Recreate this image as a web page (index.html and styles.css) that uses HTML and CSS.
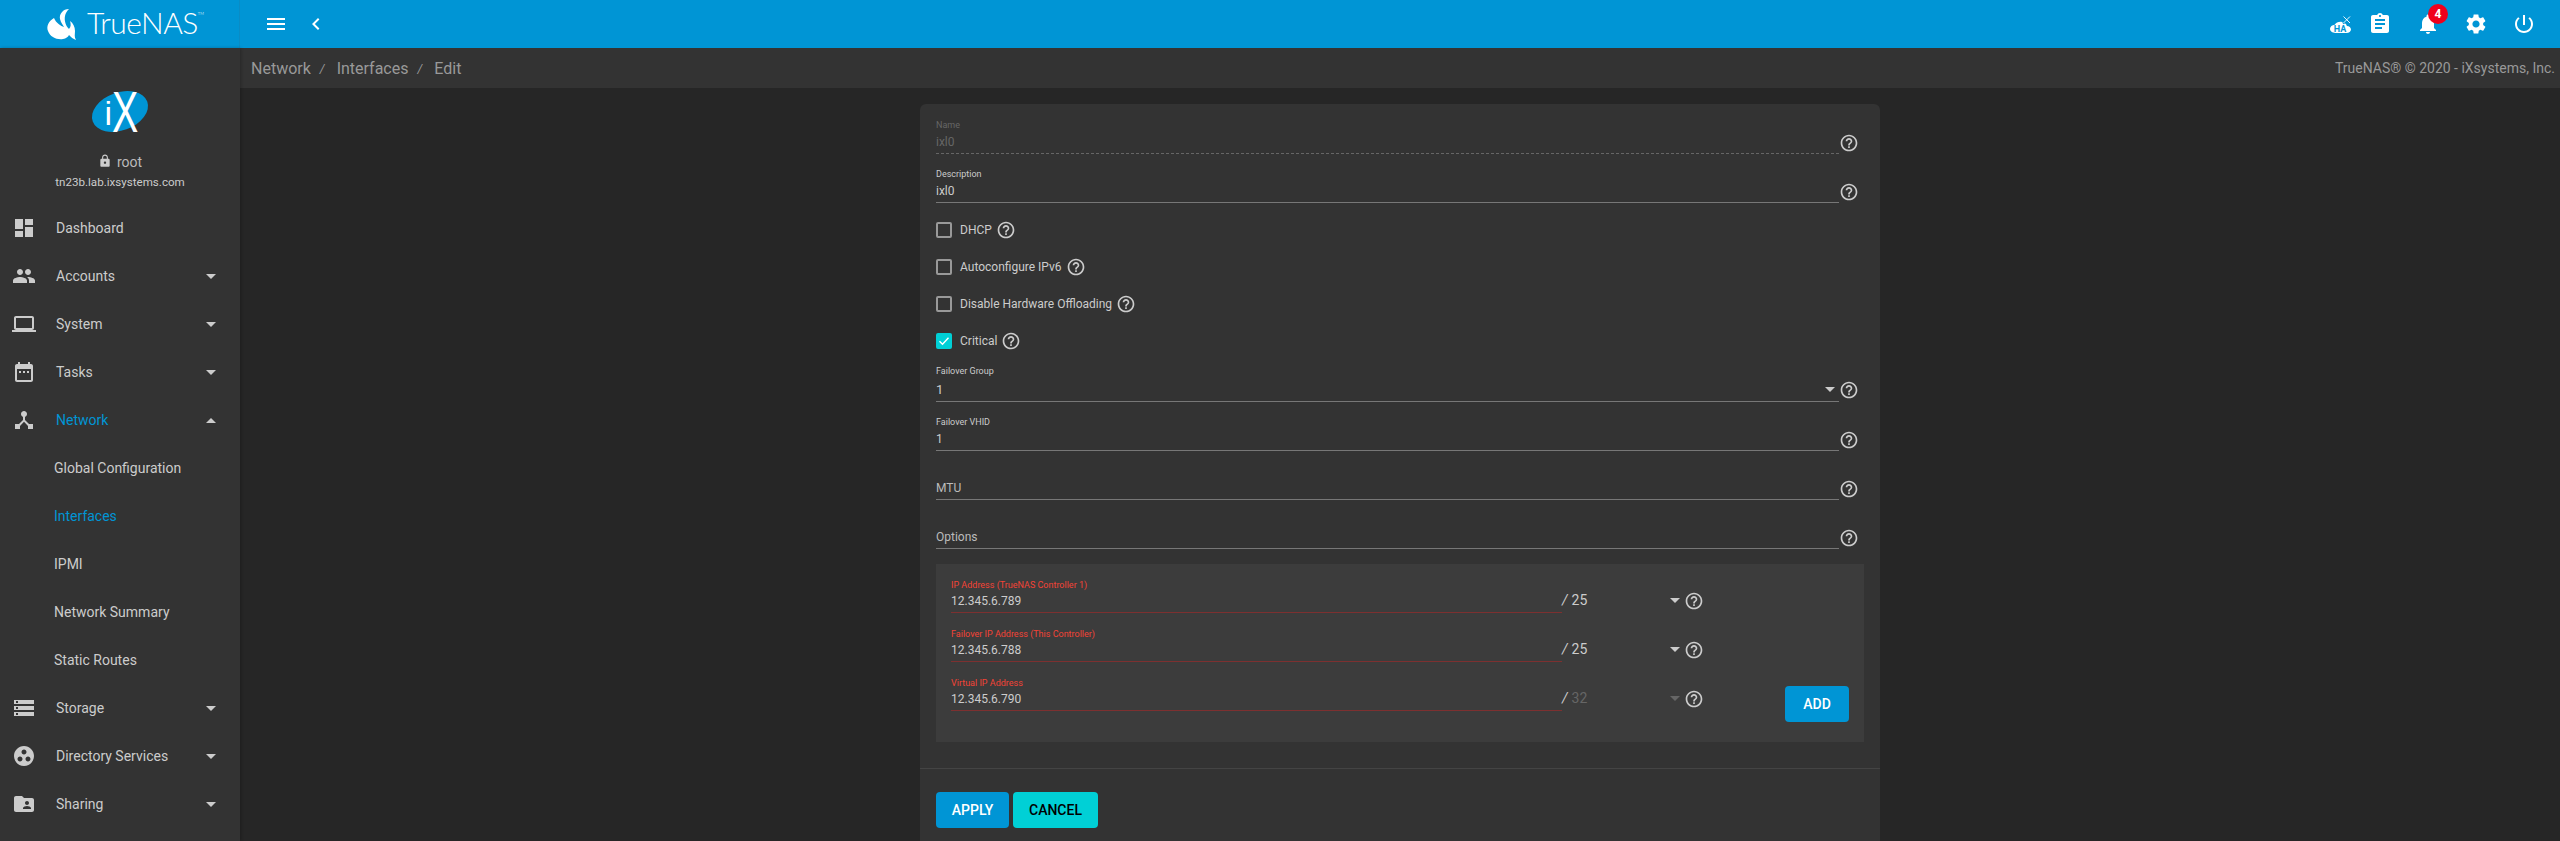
FILE: index.html
```html
<!DOCTYPE html>
<html>
  <head>
    <meta charset="utf-8">
    <title>TrueNAS - Network / Interfaces / Edit</title>
    <link rel="stylesheet" href="styles.css">
  </head>
  <body>

    <svg class="defs" width="0" height="0">
      <symbol id="i-dashboard" viewBox="0 0 24 24"><path d="M3 13h8V3H3v10zm0 8h8v-6H3v6zm10 0h8V11h-8v10zm0-18v6h8V3h-8z"/></symbol>
      <symbol id="i-people" viewBox="0 0 24 24"><path d="M16 11c1.66 0 2.99-1.34 2.99-3S17.66 5 16 5c-1.66 0-3 1.34-3 3s1.34 3 3 3zm-8 0c1.66 0 2.99-1.34 2.99-3S9.66 5 8 5C6.34 5 5 6.34 5 8s1.34 3 3 3zm0 2c-2.33 0-7 1.17-7 3.5V19h14v-2.5c0-2.33-4.67-3.5-7-3.5zm8 0c-.29 0-.62.02-.97.05 1.16.84 1.97 1.97 1.97 3.45V19h6v-2.5c0-2.33-4.67-3.5-7-3.5z"/></symbol>
      <symbol id="i-laptop" viewBox="0 0 24 24"><path d="M20 18c1.1 0 1.99-.9 1.99-2L22 6c0-1.1-.9-2-2-2H4c-1.1 0-2 .9-2 2v10c0 1.1.9 2 2 2H0v2h24v-2h-4zM4 6h16v10H4V6z"/></symbol>
      <symbol id="i-tasks" viewBox="0 0 24 24"><path d="M9 11H7v2h2v-2zm4 0h-2v2h2v-2zm4 0h-2v2h2v-2zm2-7h-1V2h-2v2H8V2H6v2H5c-1.11 0-1.99.9-1.99 2L3 20c0 1.1.89 2 2 2h14c1.1 0 2-.9 2-2V6c0-1.1-.9-2-2-2zm0 16H5V9h14v11z"/></symbol>
      <symbol id="i-hub" viewBox="0 0 24 24"><path d="M17 16l-4-4V8.82C14.16 8.4 15 7.3 15 6c0-1.66-1.34-3-3-3S9 4.34 9 6c0 1.3.84 2.4 2 2.82V12l-4 4H3v5h5v-3.05l4-4.2 4 4.2V21h5v-5h-4z"/></symbol>
      <symbol id="i-storage" viewBox="0 0 24 24"><path d="M2 20h20v-4H2v4zm2-3h2v2H4v-2zM2 4v4h20V4H2zm4 3H4V5h2v2zm-4 7h20v-4H2v4zm2-3h2v2H4v-2z"/></symbol>
      <symbol id="i-group" viewBox="0 0 24 24"><path d="M12 2C6.48 2 2 6.48 2 12s4.48 10 10 10 10-4.48 10-10S17.52 2 12 2zM8 17.5c-1.38 0-2.5-1.12-2.5-2.5s1.12-2.5 2.5-2.5 2.5 1.12 2.5 2.5-1.12 2.5-2.5 2.5zM9.5 8c0-1.38 1.12-2.5 2.5-2.5s2.5 1.12 2.5 2.5-1.12 2.5-2.5 2.5S9.5 9.38 9.5 8zm6.5 9.5c-1.38 0-2.5-1.12-2.5-2.5s1.12-2.5 2.5-2.5 2.5 1.12 2.5 2.5-1.12 2.5-2.5 2.5z"/></symbol>
      <symbol id="i-folder" viewBox="0 0 24 24"><path d="M20 6h-8l-2-2H4c-1.1 0-1.99.9-1.99 2L2 18c0 1.1.9 2 2 2h16c1.1 0 2-.9 2-2V8c0-1.1-.9-2-2-2zm-5 3c1.1 0 2 .9 2 2s-.9 2-2 2-2-.9-2-2 .9-2 2-2zm4 8h-8v-1c0-1.33 2.67-2 4-2s4 .67 4 2v1z"/></symbol>
      <symbol id="i-help" viewBox="0 0 24 24"><path d="M11 18h2v-2h-2v2zm1-16C6.48 2 2 6.48 2 12s4.48 10 10 10 10-4.48 10-10S17.52 2 12 2zm0 18c-4.41 0-8-3.59-8-8s3.59-8 8-8 8 3.59 8 8-3.59 8-8 8zm0-14c-2.21 0-4 1.79-4 4h2c0-1.1.9-2 2-2s2 .9 2 2c0 2-3 1.75-3 5h2c0-2.25 3-2.5 3-5 0-2.21-1.79-4-4-4z"/></symbol>
    </svg>

    <div id="app">
      <div class="topbar">
        <div class="brand">
          <svg class="brand-mark" viewBox="0 0 44 36" width="44" height="36">
            <path d="M29 3C23 3 19 8 20 13C21 17 23 19 24 21C21 20 16 17 14 12C9 15 6 20 8 25C10 31 17 34 23 33C26 32.500 28 31 29 29C31 31 33 33 36 34C34 31 35 28 35 25C35 21 33 17 30 15C31 18 31 21 29 23C26 20 24 15 25 10C25.500 7 27 5 29 3Z" fill="#fff"/>
          </svg>
          <span class="brand-name">TrueNAS<sup>TM</sup></span>
        </div>
        <div class="topbar-left">
          <svg class="bar-icon" viewBox="0 0 24 24"><path d="M3 18h18v-2H3v2zm0-5h18v-2H3v2zm0-7v2h18V6H3z"/></svg>
          <svg class="bar-icon" viewBox="0 0 24 24"><path d="M15.41 7.41L14 6l-6 6 6 6 1.41-1.41L10.83 12z"/></svg>
        </div>
        <div class="topbar-right">
          <svg class="bar-icon ha" viewBox="0 0 24 24">
            <path transform="translate(2 7) scale(.875 .7)" d="M19.35 10.04C18.67 6.59 15.64 4 12 4 9.11 4 6.6 5.64 5.35 8.04 2.34 8.36 0 10.91 0 14c0 3.31 2.69 6 6 6h13c2.76 0 5-2.24 5-5 0-2.64-2.05-4.78-4.65-4.96z"/>
            <text class="ha-text" x="12" y="19.500">HA</text>
            <path d="M15 4l7.500 7.500M22.500 4L15 11.500" stroke="#0095d5" stroke-width="2.400" fill="none"/>
            <path d="M15.500 4.500l6.500 6.500M22 4.500L15.500 11" stroke="#fff" stroke-width=".9" fill="none"/>
          </svg>
          <svg class="bar-icon" viewBox="0 0 24 24"><path d="M19 3h-4.18C14.4 1.84 13.3 1 12 1c-1.3 0-2.4.84-2.82 2H5c-1.1 0-2 .9-2 2v14c0 1.1.9 2 2 2h14c1.1 0 2-.9 2-2V5c0-1.1-.9-2-2-2zm-7 0c.55 0 1 .45 1 1s-.45 1-1 1-1-.45-1-1 .45-1 1-1zm2 14H7v-2h7v2zm3-4H7v-2h10v2zm0-4H7V7h10v2z"/></svg>
          <div class="bell">
            <svg class="bar-icon" viewBox="0 0 24 24"><path d="M12 22c1.1 0 2-.9 2-2h-4c0 1.1.89 2 2 2zm6-6v-5c0-3.07-1.64-5.64-4.5-6.32V4c0-.83-.67-1.5-1.5-1.5s-1.5.67-1.5 1.5v.68C7.63 5.36 6 7.92 6 11v5l-2 2v1h16v-1l-2-2z"/></svg>
            <span class="badge">4</span>
          </div>
          <svg class="bar-icon" viewBox="0 0 24 24"><path d="M19.14 12.94c.04-.3.06-.61.06-.94 0-.32-.02-.64-.07-.94l2.03-1.58c.18-.14.23-.41.12-.61l-1.92-3.32c-.12-.22-.37-.29-.59-.22l-2.39.96c-.5-.38-1.03-.7-1.62-.94l-.36-2.54c-.04-.24-.24-.41-.48-.41h-3.84c-.24 0-.43.17-.47.41l-.36 2.54c-.59.24-1.13.57-1.62.94l-2.39-.96c-.22-.08-.47 0-.59.22L2.74 8.87c-.12.21-.08.47.12.61l2.03 1.58c-.05.3-.09.63-.09.94s.02.64.07.94l-2.03 1.58c-.18.14-.23.41-.12.61l1.92 3.32c.12.22.37.29.59.22l2.39-.96c.5.38 1.03.7 1.62.94l.36 2.54c.05.24.24.41.48.41h3.84c.24 0 .44-.17.47-.41l.36-2.54c.59-.24 1.13-.56 1.62-.94l2.39.96c.22.08.47 0 .59-.22l1.92-3.32c.12-.22.07-.47-.12-.61l-2.01-1.58zM12 15.6c-1.98 0-3.6-1.62-3.6-3.6s1.62-3.6 3.6-3.6 3.6 1.62 3.6 3.6-1.62 3.6-3.6 3.6z"/></svg>
          <svg class="bar-icon" viewBox="0 0 24 24"><path d="M13 3h-2v10h2V3zm4.83 2.17l-1.42 1.42C17.99 7.86 19 9.81 19 12c0 3.87-3.13 7-7 7s-7-3.13-7-7c0-2.19 1.01-4.14 2.58-5.42L6.17 5.17C4.23 6.82 3 9.26 3 12c0 4.97 4.03 9 9 9s9-4.03 9-9c0-2.74-1.23-5.18-3.17-6.83z"/></svg>
        </div>
      </div>

      <div class="body">
        <div class="sidebar">
          <div class="profile">
            <svg class="ix-logo" viewBox="0 0 70 70" width="70" height="70">
              <ellipse cx="35" cy="35.500" rx="29" ry="19" transform="rotate(-20 35 35.500)" fill="#0095d5"/>
              <text class="ix-text" x="19.500" y="49" font-size="34">i</text>
              <text class="ix-text" transform="translate(27 56) scale(.68 1)" font-size="58">X</text>
            </svg>
            <div class="profile-user">
              <svg class="lock" viewBox="0 0 24 24"><path d="M18 8h-1V6c0-2.76-2.24-5-5-5S7 3.24 7 6v2H6c-1.1 0-2 .9-2 2v10c0 1.1.9 2 2 2h12c1.1 0 2-.9 2-2V10c0-1.1-.9-2-2-2zm-6 9c-1.1 0-2-.9-2-2s.9-2 2-2 2 .9 2 2-.9 2-2 2zm3.1-9H8.9V6c0-1.71 1.39-3.1 3.1-3.1 1.71 0 3.1 1.39 3.1 3.1v2z"/></svg>
              root
            </div>
            <div class="profile-host">tn23b.lab.ixsystems.com</div>
          </div>
          <div class="nav">
            <div class="nav-item"><svg class="nav-icon"><use href="#i-dashboard"/></svg>Dashboard</div>
            <div class="nav-item"><svg class="nav-icon"><use href="#i-people"/></svg>Accounts<span class="caret"></span></div>
            <div class="nav-item"><svg class="nav-icon"><use href="#i-laptop"/></svg>System<span class="caret"></span></div>
            <div class="nav-item"><svg class="nav-icon"><use href="#i-tasks"/></svg>Tasks<span class="caret"></span></div>
            <div class="nav-item active"><svg class="nav-icon"><use href="#i-hub"/></svg>Network<span class="caret up"></span></div>
            <div class="nav-sub">Global Configuration</div>
            <div class="nav-sub active">Interfaces</div>
            <div class="nav-sub">IPMI</div>
            <div class="nav-sub">Network Summary</div>
            <div class="nav-sub">Static Routes</div>
            <div class="nav-item"><svg class="nav-icon"><use href="#i-storage"/></svg>Storage<span class="caret"></span></div>
            <div class="nav-item"><svg class="nav-icon"><use href="#i-group"/></svg>Directory Services<span class="caret"></span></div>
            <div class="nav-item"><svg class="nav-icon"><use href="#i-folder"/></svg>Sharing<span class="caret"></span></div>
          </div>
        </div>

        <div class="main">
          <div class="crumbs">
            <span>Network</span><i>/</i><span>Interfaces</span><i>/</i><span>Edit</span>
            <span class="copyright">TrueNAS® © 2020 - iXsystems, Inc.</span>
          </div>

          <div class="card">
            <div class="form">
              <div class="field disabled">
                <div class="control dashed"><label>Name</label><div class="value">ixl0</div></div>
                <svg class="help"><use href="#i-help"/></svg>
              </div>
              <div class="field before-checks">
                <div class="control"><label>Description</label><div class="value">ixl0</div></div>
                <svg class="help"><use href="#i-help"/></svg>
              </div>

              <div class="check"><span class="box"></span>DHCP<svg class="help"><use href="#i-help"/></svg></div>
              <div class="check"><span class="box"></span>Autoconfigure IPv6<svg class="help"><use href="#i-help"/></svg></div>
              <div class="check"><span class="box"></span>Disable Hardware Offloading<svg class="help"><use href="#i-help"/></svg></div>
              <div class="check"><span class="box on"><svg viewBox="0 0 16 16"><path d="M3.500 8.200l3 3 6-6.400" fill="none" stroke="#fff" stroke-width="1.400"/></svg></span>Critical<svg class="help"><use href="#i-help"/></svg></div>

              <div class="field after-checks">
                <div class="control tall"><label>Failover Group</label><div class="value">1<span class="caret"></span></div></div>
                <svg class="help"><use href="#i-help"/></svg>
              </div>
              <div class="field">
                <div class="control"><label>Failover VHID</label><div class="value">1</div></div>
                <svg class="help"><use href="#i-help"/></svg>
              </div>
              <div class="field">
                <div class="control"><label></label><div class="value hint">MTU</div></div>
                <svg class="help"><use href="#i-help"/></svg>
              </div>
              <div class="field">
                <div class="control"><label></label><div class="value hint">Options</div></div>
                <svg class="help"><use href="#i-help"/></svg>
              </div>

              <div class="ip-list">
                <div class="ip-rows">
                  <div class="ip-row">
                    <div class="control error"><label>IP Address (TrueNAS Controller 1)</label><div class="value">12.345.6.789</div></div>
                    <div class="mask"><i>/</i>25<span class="caret"></span></div>
                    <svg class="help"><use href="#i-help"/></svg>
                  </div>
                  <div class="ip-row">
                    <div class="control error"><label>Failover IP Address (This Controller)</label><div class="value">12.345.6.788</div></div>
                    <div class="mask"><i>/</i>25<span class="caret"></span></div>
                    <svg class="help"><use href="#i-help"/></svg>
                  </div>
                  <div class="ip-row">
                    <div class="control error"><label>Virtual IP Address</label><div class="value">12.345.6.790</div></div>
                    <div class="mask off"><i>/</i><b>32</b><span class="caret"></span></div>
                    <svg class="help"><use href="#i-help"/></svg>
                  </div>
                </div>
                <button class="btn primary add">ADD</button>
              </div>
            </div>

            <div class="actions">
              <button class="btn primary apply">APPLY</button>
              <button class="btn accent cancel">CANCEL</button>
            </div>
          </div>
        </div>
      </div>
    </div>

  </body>
</html>
```

FILE: styles.css
```css
html, body {
  margin: 0;
  height: 100%;
  overflow: hidden;
  background: #262626;
  font-family: Roboto, "Liberation Sans", sans-serif;
  color: #ccc;
}

.defs {
  display: block;
  height: 0;
}

#app {
  display: flex;
  flex-direction: column;
  height: 841px;
}

/* top bar */

.topbar {
  flex: 0 0 48px;
  display: flex;
  align-items: center;
  background: #0095d5;
  color: #fff;
}

.brand {
  flex: 0 0 240px;
  height: 48px;
  box-sizing: border-box;
  display: flex;
  align-items: center;
  padding-left: 40px;
  border-right: 1px solid #0a8cc5;
}

.brand-name {
  align-self: flex-start;
  margin-left: 3px;
  font-family: Lato, sans-serif;
  font-weight: 300;
  font-size: 30px;
  letter-spacing: -0.5px;
  line-height: 44px;
}

.brand-name sup {
  font-size: 4px;
  letter-spacing: 0;
  vertical-align: 19px;
  line-height: 0;
}

.topbar-left {
  display: flex;
  align-items: center;
  gap: 16px;
  margin-left: 24px;
}

.topbar-right {
  margin-left: auto;
  display: flex;
  align-items: center;
  gap: 24px;
  padding-right: 24px;
}

.bar-icon {
  display: block;
  width: 24px;
  height: 24px;
  fill: #fff;
}

.bar-icon.ha {
  margin-right: -8px;
}

.ha-text {
  font-size: 9px;
  font-weight: 700;
  fill: #0095d5;
  text-anchor: middle;
}

.bell {
  position: relative;
}

.badge {
  position: absolute;
  top: -8px;
  left: 12px;
  width: 20px;
  height: 20px;
  border-radius: 50%;
  background: #f0001c;
  color: #fff;
  font-size: 12px;
  font-weight: 700;
  line-height: 20px;
  text-align: center;
}

/* sidebar */

.body {
  flex: 1 1 auto;
  display: flex;
  min-height: 0;
}

.sidebar {
  flex: 0 0 240px;
  background: #333;
  box-shadow: 1px 0 3px rgba(0, 0, 0, 0.25);
  position: relative;
}

.profile {
  height: 156px;
  box-sizing: border-box;
  padding-top: 28px;
  display: flex;
  flex-direction: column;
  align-items: center;
}

.ix-logo {
  display: block;
  flex: none;
}

.ix-text {
  font-family: "Liberation Sans", sans-serif;
  fill: #fff;
}

.profile-user {
  display: flex;
  align-items: center;
  margin-top: 6px;
  height: 20px;
  font-size: 14px;
  color: #bbb;
}

.lock {
  width: 14px;
  height: 14px;
  fill: #ccc;
  margin-right: 5px;
  margin-top: -3px;
}

.profile-host {
  margin-top: 1px;
  font-size: 11.6px;
  line-height: 18px;
  color: #ccc;
}

.nav-item, .nav-sub {
  height: 48px;
  display: flex;
  align-items: center;
  font-size: 14px;
  color: #ccc;
}

.nav-item {
  padding: 0 24px 0 12px;
}

.nav-sub {
  padding-left: 54px;
}

.nav-item.active, .nav-sub.active {
  color: #0095d5;
}

.nav-icon {
  flex: none;
  width: 24px;
  height: 24px;
  margin-right: 20px;
  fill: #ccc;
}

.caret {
  margin-left: auto;
  width: 0;
  height: 0;
  border-left: 5px solid transparent;
  border-right: 5px solid transparent;
  border-top: 5px solid #ccc;
}

.caret.up {
  border-top: 0;
  border-bottom: 5px solid #ccc;
}

/* content */

.main {
  flex: 1 1 auto;
  min-width: 0;
}

.crumbs {
  height: 40px;
  display: flex;
  align-items: center;
  padding: 0 5px 0 11px;
  background: #333;
  font-size: 16px;
  color: #999;
}

.crumbs i {
  font-size: 12px;
  margin: 2px 12px 0 9px;
}

.copyright {
  margin-left: auto;
  font-size: 14px;
}

.card {
  width: 960px;
  margin: 16px auto 0;
  background: #333;
  border-radius: 6px;
}

.form {
  padding: 15px 16px 26px;
  border-bottom: 1px solid #444;
}

.field {
  display: flex;
  width: 923px;
  margin-bottom: 14px;
}

.control {
  flex: 1 1 auto;
  height: 35px;
  box-sizing: border-box;
  border-bottom: 1px solid #777;
}

.control.tall {
  height: 37px;
}

.control.dashed {
  border-bottom-style: dashed;
  border-bottom-color: #666;
}

.control label {
  display: block;
  height: 12px;
  font-size: 9px;
  line-height: 12px;
  color: #ccc;
}

.value {
  display: flex;
  align-items: center;
  height: 22px;
  font-size: 12px;
  color: #ccc;
}

.control.tall .value {
  height: 24px;
  font-size: 13px;
}

.value .caret {
  margin-right: 4px;
}

.value.hint {
  color: #bbb;
}

.disabled label, .disabled .value {
  color: #666;
}

.help {
  flex: none;
  display: block;
  width: 20px;
  height: 20px;
  margin-top: 14px;
  fill: #ccc;
}

.before-checks {
  margin-bottom: 8px;
}

.check {
  height: 37px;
  display: flex;
  align-items: center;
  font-size: 12px;
  color: #ccc;
}

.box {
  flex: none;
  width: 16px;
  height: 16px;
  box-sizing: border-box;
  margin-right: 8px;
  border: 2px solid #999;
  border-radius: 2px;
}

.box.on {
  border: 0;
  background: #00d0d6;
}

.box svg {
  display: block;
}

.check .help {
  margin: 0 0 0 4px;
}

.after-checks {
  margin-top: 6px;
}

.after-checks .help {
  margin-top: 15px;
}

/* ip address list */

.ip-list {
  display: flex;
  justify-content: space-between;
  align-items: flex-end;
  width: 928px;
  box-sizing: border-box;
  margin-top: 15px;
  padding: 14px 15px 20px;
  background: #3c3c3c;
}

.ip-rows {
  flex: 0 0 752px;
  padding-bottom: 11px;
}

.ip-row {
  display: flex;
  margin-bottom: 14px;
}

.ip-row:last-child {
  margin-bottom: 0;
}

.ip-row .control {
  flex: 0 0 611px;
  height: 35px;
}

.control.error {
  border-bottom-color: #7d3030;
}

.control.error label {
  line-height: 14px;
  color: #f44336;
}

.mask {
  flex: 0 0 122px;
  box-sizing: border-box;
  display: flex;
  align-items: center;
  height: 22px;
  margin-top: 11px;
  padding-right: 4px;
  font-size: 14px;
  color: #ccc;
}

.mask i {
  margin-right: 4px;
}

.mask b {
  font-weight: 400;
  color: #666;
}

.mask.off .caret {
  border-top-color: #666;
}

.ip-row .help {
  margin-top: 13px;
}

/* buttons */

.actions {
  display: flex;
  gap: 4px;
  padding: 23px 16px 24px;
}

.btn {
  height: 36px;
  border: 0;
  border-radius: 4px;
  font-family: Roboto, "Liberation Sans", sans-serif;
  font-size: 14px;
  font-weight: 500;
  padding: 0;
}

.btn.primary {
  background: #0095d5;
  color: #fff;
}

.btn.accent {
  background: #00d0d6;
  color: #000;
}

.add {
  width: 64px;
}

.apply {
  width: 73px;
}

.cancel {
  width: 85px;
}
```
